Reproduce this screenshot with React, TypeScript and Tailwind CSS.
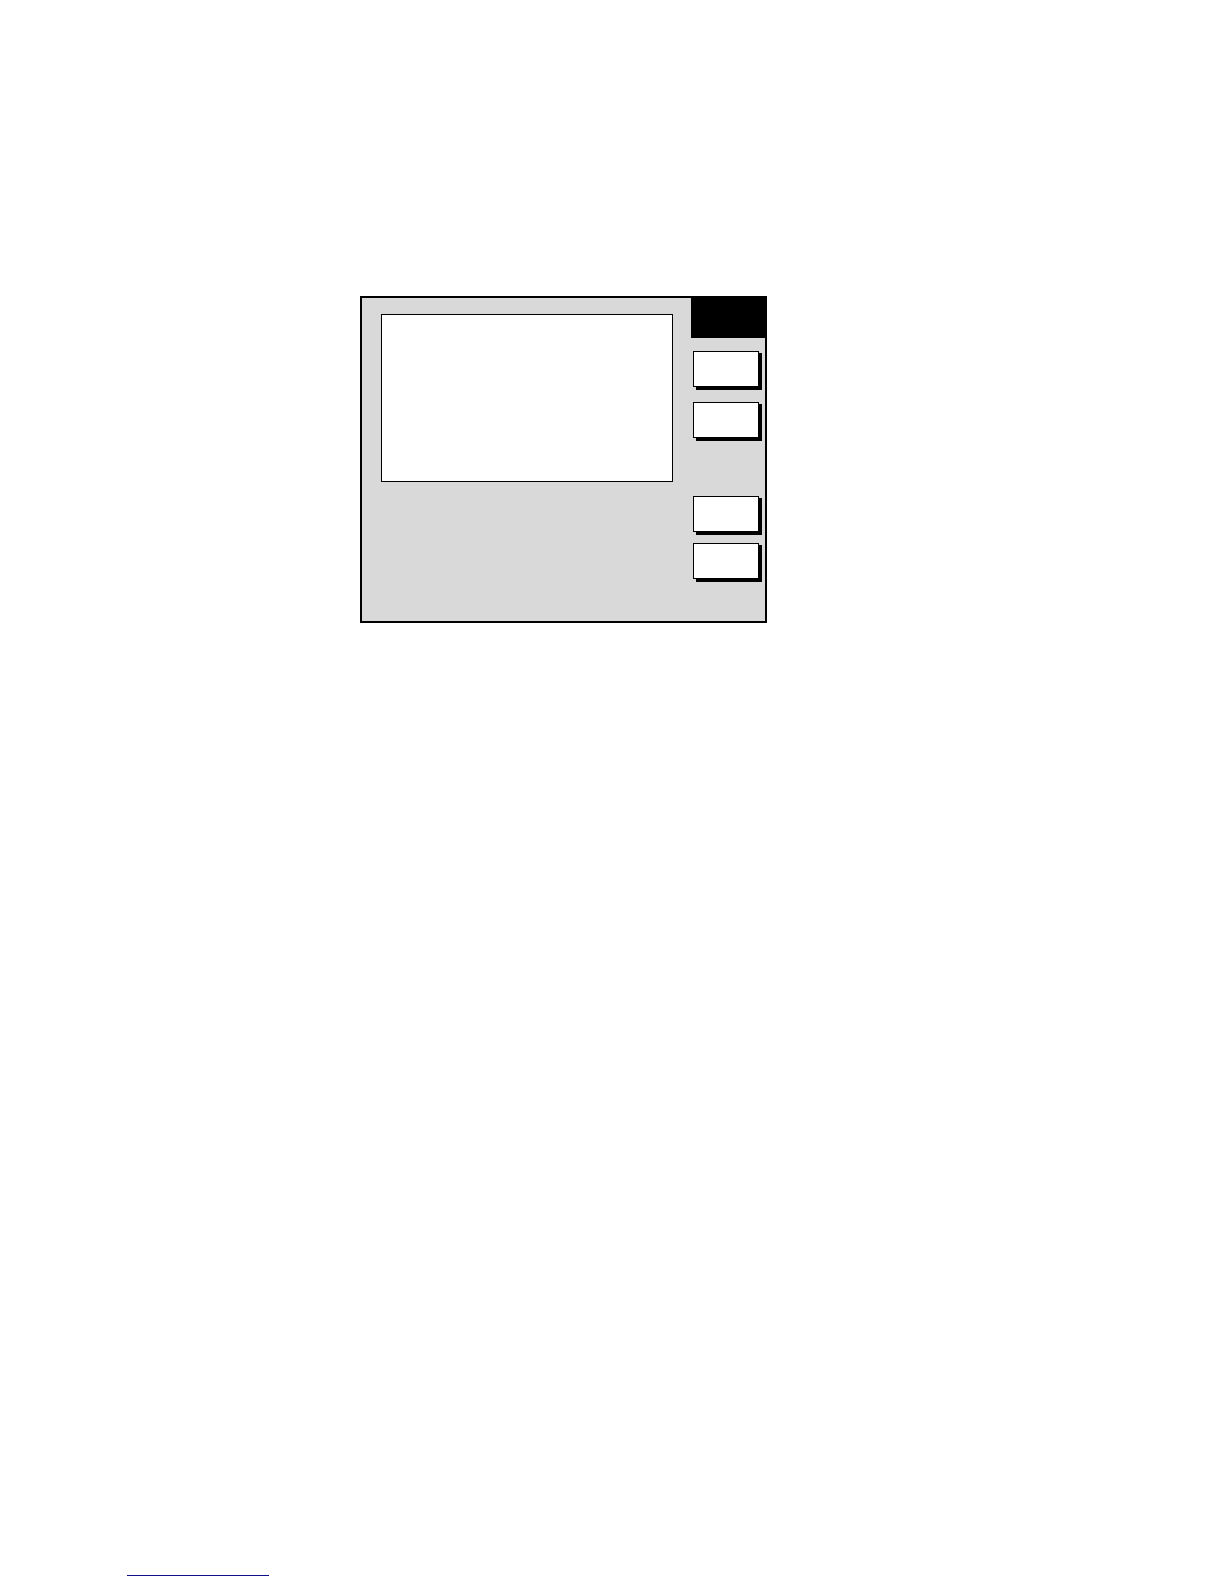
type SoftKeyProps = { label: string };

function SoftKey({ label }: SoftKeyProps) {
  return (
    <button
      type="button"
      aria-label={label}
      className="block h-9 w-full border border-black bg-white shadow-[3px_2px_0_#000,3px_3px_0_#000]"
    />
  );
}

export default function App() {
  return (
    <div className="flex min-h-screen flex-col bg-white">
      <main className="pt-[296px] pl-[360px]">
        <section
          aria-label="Display"
          className="flex w-full max-w-[407px] border-2 border-black bg-[#d9d9d9]"
        >
          <div className="flex-1 pt-4 pr-[18px] pl-[19px]">
            <div className="h-[168px] border border-black bg-white" />
          </div>
          <aside aria-label="Soft keys" className="w-[74px] shrink-0 pb-[42px]">
            <div className="h-10 bg-black" />
            <div className="flex flex-col gap-[58px] pt-[13px] pr-[6px] pl-[2px]">
              <div className="flex flex-col gap-[15px]">
                <SoftKey label="Soft key 1" />
                <SoftKey label="Soft key 2" />
              </div>
              <div className="flex flex-col gap-[11px]">
                <SoftKey label="Soft key 3" />
                <SoftKey label="Soft key 4" />
              </div>
            </div>
          </aside>
        </section>
      </main>
      <footer className="mt-auto pb-2 pl-[127px]">
        <a
          href="#"
          aria-label="Website"
          className="block h-4 w-[142px] border-b border-b-[#10108c]"
        />
      </footer>
    </div>
  );
}
